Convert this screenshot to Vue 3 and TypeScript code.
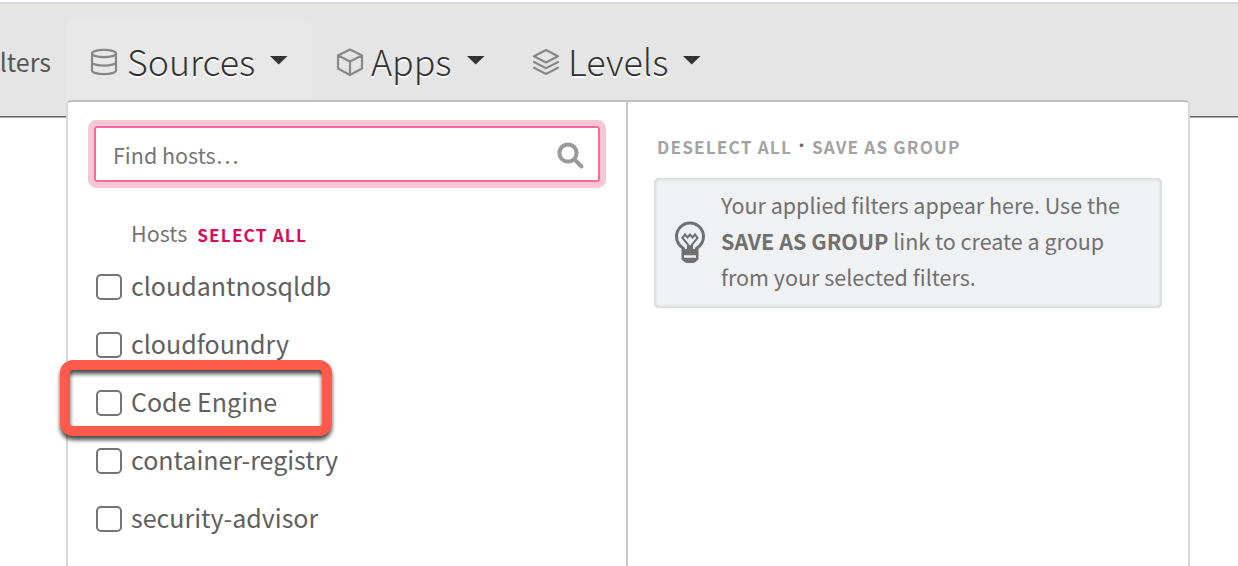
<script setup lang="ts">
interface NavItem {
  id: string
  label: string
  active: boolean
}

const navItems: NavItem[] = [
  { id: 'sources', label: 'Sources', active: true },
  { id: 'apps', label: 'Apps', active: false },
  { id: 'levels', label: 'Levels', active: false },
]

const hosts: string[] = [
  'cloudantnosqldb',
  'cloudfoundry',
  'Code Engine',
  'container-registry',
  'security-advisor',
]
</script>

<template>
  <div class="page">
    <header class="bar">
      <div class="filters"><span>lters</span></div>
      <button
        v-for="item in navItems"
        :key="item.id"
        type="button"
        class="tab"
        :class="['tab-' + item.id, { active: item.active }]"
      >
        <svg v-if="item.id === 'sources'" class="icon" viewBox="0 0 28 28">
          <ellipse cx="14" cy="5.5" rx="12" ry="3.7" />
          <path d="M2 5.500v17c0 2 5.400 3.700 12 3.700s12-1.700 12-3.700v-17M2 14c0 2 5.400 3.700 12 3.700s12-1.700 12-3.700" />
        </svg>
        <svg v-else-if="item.id === 'apps'" class="icon" viewBox="0 0 28 28">
          <path d="M14 1.500 26 7.500v13L14 27 2 20.500v-13zM2 7.500l12 6 12-6M14 13.500V27" />
        </svg>
        <svg v-else class="icon" viewBox="0 0 28 28">
          <path d="M14 2 26 8.200 14 14.500 2 8.200zM2 14l12 6.200L26 14M2 19.700l12 6.200 12-6.200" />
        </svg>
        <span class="tab-label">{{ item.label }}</span>
        <svg class="caret" viewBox="0 0 18 9"><path d="M0 0h17.500L8.750 8.600z" /></svg>
      </button>
    </header>

    <section class="menu">
      <div class="left">
        <div class="search">
          <span>Find hosts…</span>
          <svg class="glass" viewBox="0 0 28 28">
            <circle cx="11" cy="11" r="8.600" />
            <path d="m17.500 17.500 7 7" />
          </svg>
        </div>
        <div class="group">
          <span class="group-name">Hosts</span>
          <a class="select-all">SELECT ALL</a>
        </div>
        <ul class="hosts">
          <li v-for="host in hosts" :key="host">
            <span class="box"></span><span class="host-name">{{ host }}</span>
          </li>
        </ul>
      </div>
      <div class="right">
        <div class="actions"><span>DESELECT ALL</span><i>·</i><span>SAVE AS GROUP</span></div>
        <div class="hint">
          <svg class="bulb" viewBox="0 0 32 44">
            <path class="line" d="M9.500 31V28.500C5 25.500 2.500 21.500 2.500 16.500a13.500 13.500 0 0 1 27 0c0 5-2.500 9-7 12V31" />
            <path class="thin" d="M14 29v-4.500l-5.500-6.500 2.500-3.500 2.500 3 2.500-3 2.500 3 2.500-3 2.500 3.500-5.500 6.500v4.500" />
            <path class="solid" d="M7.500 29h6v-4h5v4h6v10.500l-3 2.500q-1 1-3 1h-5q-2 0-3-1l-3-2.500z" />
            <path class="slot" d="M10 36.500h12" />
          </svg>
          <p>
            Your applied filters appear here. Use the<br />
            <b>SAVE AS GROUP</b> link to create a group<br />
            from your selected filters.
          </p>
        </div>
      </div>
    </section>

    <div class="callout"></div>
  </div>
</template>

<style>
body {
  margin: 0;
  background: #fff;
}
</style>

<style scoped>
* {
  box-sizing: border-box;
}
.page {
  position: relative;
  width: 1238px;
  height: 566px;
  overflow: hidden;
  padding-top: 2px;
  background: #fff;
  font-family: 'Noto Sans CJK SC', 'Noto Sans', sans-serif;
  color: #606060;
}
.bar {
  display: flex;
  height: 115px;
  border-top: 2px solid #d8d9e2;
  border-bottom: 1px solid #666;
  box-shadow: 0 1px 0 #a8a8a8;
  background: #e5e5e5;
  padding-top: 16px;
}
.filters {
  display: flex;
  justify-content: flex-end;
  width: 51px;
  margin-right: 15px;
  overflow: hidden;
  font-size: 25px;
  line-height: 82px;
  color: #555;
}
.tab {
  display: flex;
  align-items: center;
  height: 82px;
  padding: 0 24px;
  border: 0;
  border-radius: 4px;
  background: none;
  font-family: inherit;
  color: #333;
}
.tab.active {
  width: 246px;
  background: #e8e8e8;
}
.tab-apps {
  width: 196px;
}
.icon {
  flex: none;
  width: 28px;
  height: 28px;
  margin-top: 2px;
  fill: none;
  stroke: #888;
  stroke-width: 2.200;
  stroke-linejoin: round;
  stroke-linecap: round;
}
.tab-label {
  margin-left: 9px;
  padding-bottom: 2px;
  font-size: 35.800px;
  font-weight: 300;
  line-height: 78px;
  text-shadow: 0 2px 0 #fff;
}
.tab-apps .tab-label {
  margin-left: 7px;
}
.tab-levels .tab-label {
  margin-left: 8px;
}
.caret {
  flex: none;
  width: 18px;
  height: 9px;
  margin: -2px 0 0 15px;
  fill: #333;
}
.menu {
  position: absolute;
  top: 100px;
  left: 66px;
  display: flex;
  width: 1124px;
  height: 480px;
  border: 2px solid #d9d9d9;
  border-top-color: #c0c0c0;
  border-radius: 5px;
  background: #fff;
}
.left {
  width: 560px;
  padding: 24px 26px 0;
  border-right: 2px solid #c8c8c8;
}
.search {
  display: flex;
  align-items: center;
  justify-content: space-between;
  width: 506px;
  height: 56px;
  padding: 2px 13px 0 17px;
  border: 2px solid #f96b9f;
  border-radius: 3px;
  box-shadow: 0 0 0 6px #f8c7d6;
  font-size: 21.500px;
  line-height: 50px;
  color: #757575;
}
.glass {
  width: 28px;
  height: 28px;
  margin-top: 2px;
  fill: none;
  stroke: #999;
  stroke-width: 4;
  stroke-linecap: round;
}
.group {
  display: flex;
  align-items: baseline;
  height: 46px;
  margin: 28px 0 0 37px;
  line-height: 46px;
  color: #757575;
}
.group-name {
  font-size: 21.500px;
}
.select-all {
  margin-left: 10px;
  font-size: 17.200px;
  font-weight: 700;
  letter-spacing: 1.150px;
  color: #db0a5b;
}
.hosts {
  margin: 2px 0 0;
  padding: 0;
  list-style: none;
}
.hosts li {
  display: flex;
  align-items: center;
  height: 58px;
  padding-left: 2px;
}
.box {
  width: 26px;
  height: 26px;
  border: 2px solid #757575;
  border-radius: 5px;
}
.host-name {
  margin-left: 9px;
  padding-bottom: 4px;
  font-size: 25px;
  line-height: 54px;
}
.right {
  padding: 25px 26px 0;
}
.actions {
  display: flex;
  height: 38px;
  margin-left: 3px;
  font-size: 17.200px;
  font-weight: 700;
  line-height: 39px;
  letter-spacing: 1.150px;
  color: #a3a3a3;
}
.actions i {
  width: 20px;
  font-size: 14px;
  line-height: 34px;
  text-align: center;
  font-style: normal;
  color: #666;
}
.hint {
  display: flex;
  width: 508px;
  height: 130px;
  margin-top: 13px;
  padding: 9px 0 0 20px;
  border-radius: 5px;
  background: #f0f1f3;
  box-shadow: inset 0 0 4px rgba(0, 0, 0, 0.220);
}
.bulb {
  flex: none;
  width: 32px;
  height: 44px;
  margin-top: 33px;
}
.line,
.thin,
.slot {
  fill: none;
  stroke: #707070;
  stroke-width: 3;
}
.thin {
  stroke-width: 2;
}
.solid {
  fill: #707070;
}
.slot {
  stroke: #f0f1f3;
  stroke-width: 2.500;
}
.hint p {
  margin: 0 0 0 15px;
  font-size: 21.500px;
  line-height: 36px;
  white-space: nowrap;
  color: #707070;
}
.callout {
  position: absolute;
  top: 360px;
  left: 60px;
  width: 272px;
  height: 76px;
  border: 10px solid #ff5a4c;
  border-radius: 13px;
  filter: drop-shadow(0 4px 2px rgba(0, 0, 0, 0.700));
}
</style>
